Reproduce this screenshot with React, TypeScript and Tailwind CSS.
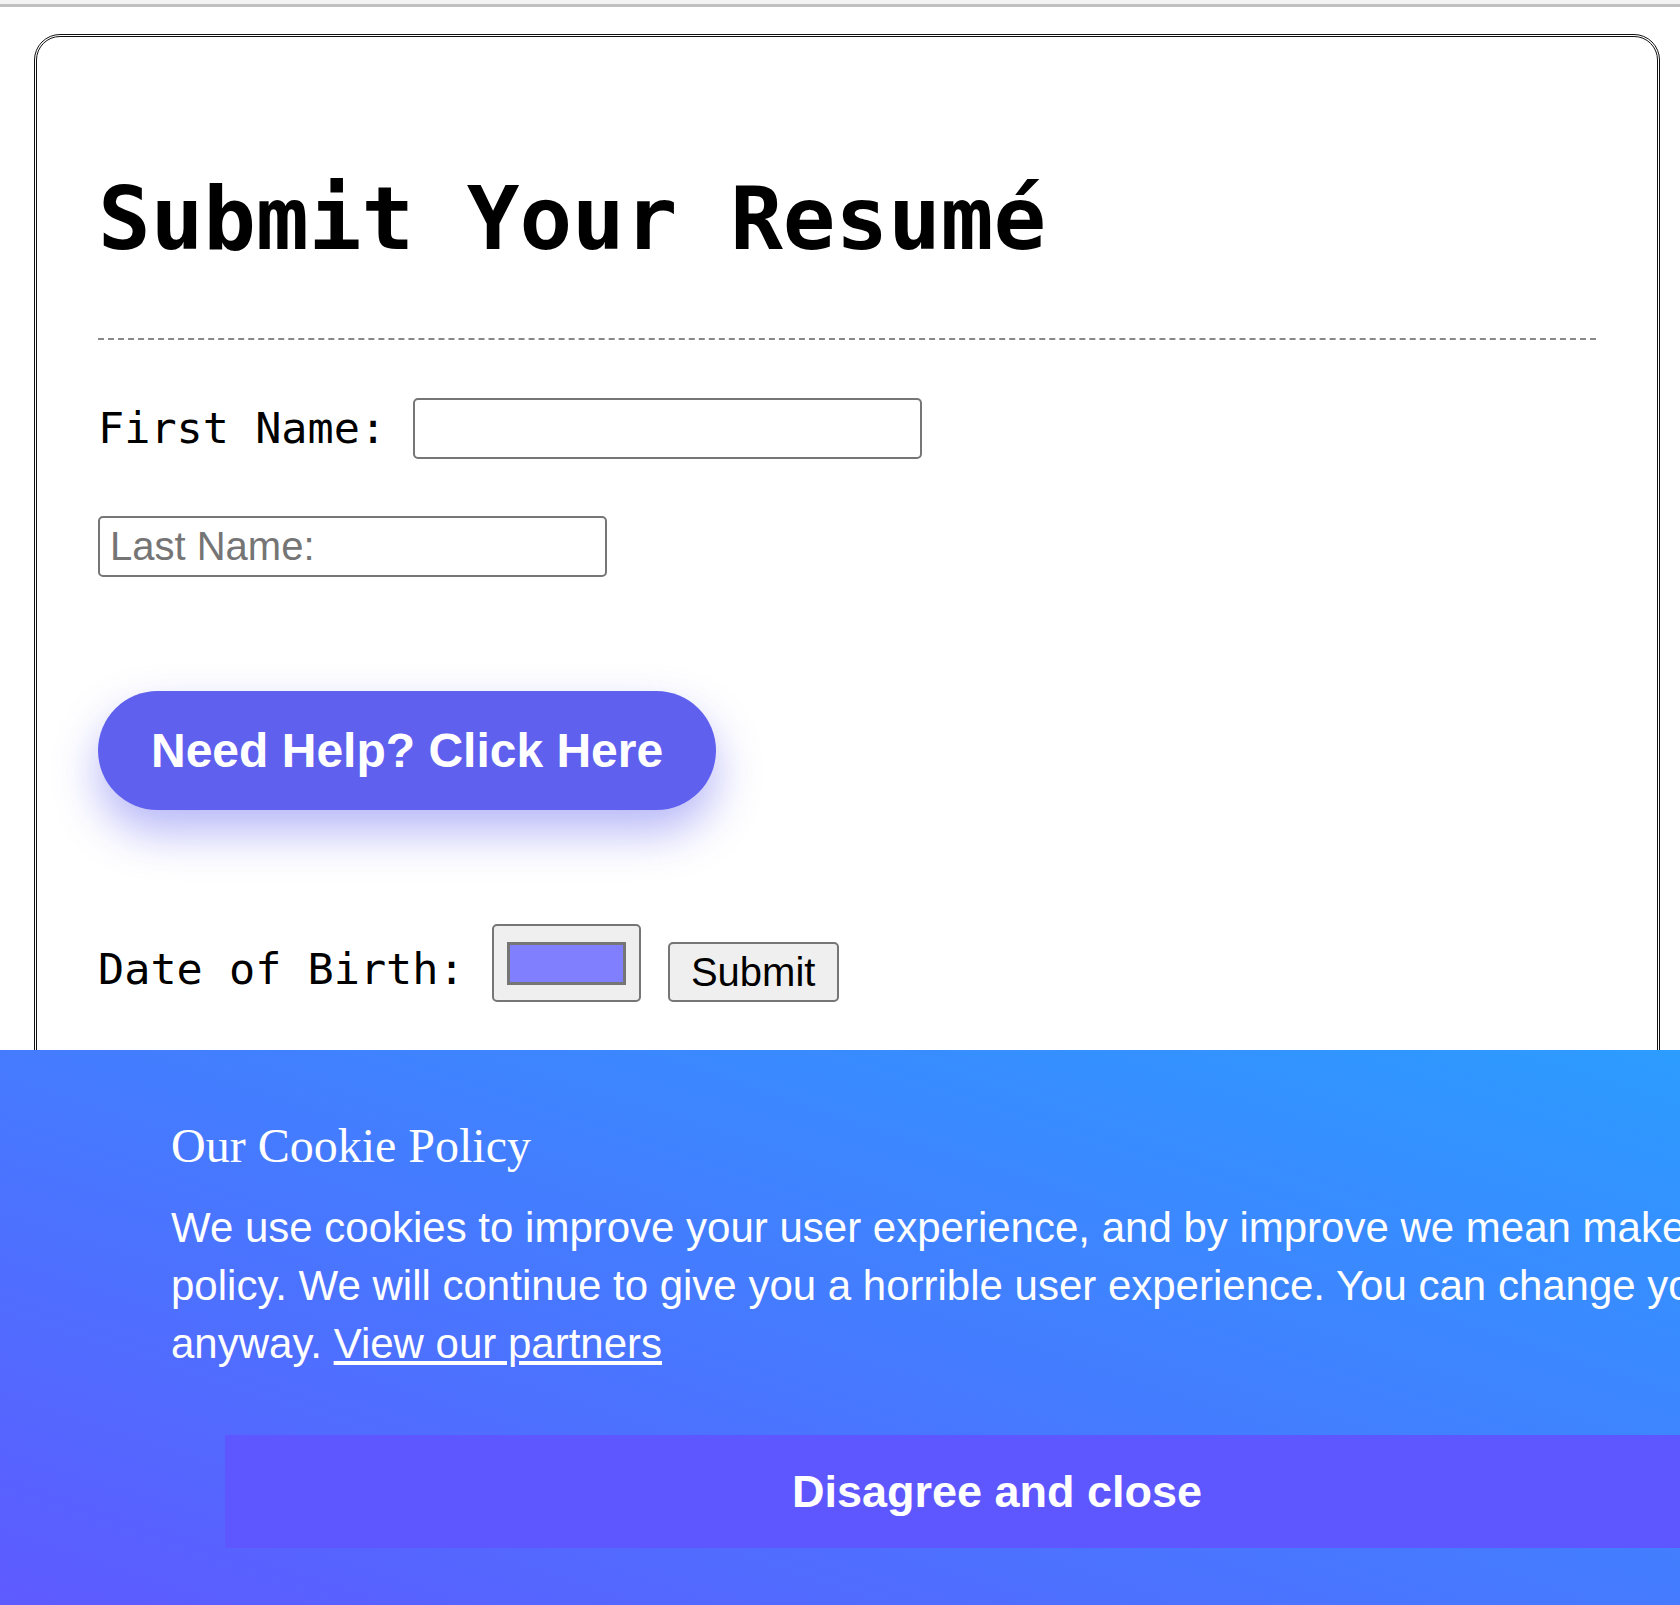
import React from "react";

const mono = "font-['DejaVu_Sans_Mono',monospace]";
const sans = "font-['Liberation_Sans',Arial,sans-serif]";

const App: React.FC = () => {
  return (
    <div className="relative w-[1680px] h-[1605px] overflow-hidden bg-white">
      <div className="h-[4px] bg-[#f3f3f3]" />
      <div className="h-[3px] bg-[#c0c0c0]" />

      {/* resume card */}
      <div className="mt-[27px] ml-[34px] w-[1626px] border-[3px] border-double border-[#111] rounded-[26px] px-[61px] pt-[131px] pb-[160px]">
        <h1 className={`${mono} text-[87.5px] leading-[102px] font-bold text-black`}>Submit Your Resumé</h1>
        <div className="mt-[68px] border-t-2 border-dashed border-[#888]" />

        <div className="mt-[58px] flex items-center gap-[27px]">
          <label className={`${mono} text-[43.5px] leading-[51px] text-black`}>First Name:</label>
          <input
            type="text"
            className={`${sans} h-[61px] w-[509px] border-2 border-[#767676] rounded-[5px] px-[9px] text-[40px]`}
          />
        </div>

        <input
          type="text"
          placeholder="Last Name:"
          className={`${sans} block mt-[57px] h-[61px] w-[509px] border-2 border-[#767676] rounded-[5px] px-[10px] text-[40px] placeholder:text-[#757575]`}
        />

        <button
          className={`${sans} mt-[114px] block h-[119px] px-[53px] rounded-full bg-[#6060ef] text-white font-bold text-[48px] shadow-[0_22px_45px_rgba(96,96,239,0.45)]`}
        >
          Need Help? Click Here
        </button>

        <div className="mt-[114px] flex items-end">
          <label className={`${mono} text-[43.5px] leading-[51px] text-black mb-[7px]`}>Date of Birth:</label>
          <div className="ml-[27px] w-[149px] h-[78px] border-2 border-[#767676] rounded-[5px] bg-[#efefef] flex items-center justify-center">
            <div className="w-[119px] h-[43px] border-[3px] border-[#767676] bg-[#8080ff]" />
          </div>
          <button
            className={`${sans} ml-[27px] w-[171px] h-[60px] border-2 border-[#767676] rounded-[5px] bg-[#efefef] text-[40px] leading-[46px] text-black`}
          >
            Submit
          </button>
        </div>
      </div>

      {/* cookie banner */}
      <div className="absolute left-0 bottom-0 w-[1680px] h-[555px] overflow-hidden bg-[linear-gradient(to_top_right,#5e5aff,#2c9cff)] text-white">
        <div className="pl-[171px] pt-[68px] w-[1900px]">
          <h2 className="font-['Liberation_Serif',serif] text-[48px] leading-[55px]">Our Cookie Policy</h2>
          <p className={`${sans} mt-[26px] text-[42px] leading-[58px] whitespace-nowrap`}>
            We use cookies to improve your user experience, and by improve we mean make it worse. Read our
            <br />
            policy. We will continue to give you a horrible user experience. You can change your settings, it won't help
            <br />
            anyway. <a href="#" className="underline">View our partners</a>
          </p>
          <button
            className={`${sans} mt-[62px] ml-[54px] w-[1544px] h-[113px] bg-[#5e57ff] text-white font-bold text-[45px]`}
          >
            Disagree and close
          </button>
        </div>
      </div>
    </div>
  );
};

export default App;
